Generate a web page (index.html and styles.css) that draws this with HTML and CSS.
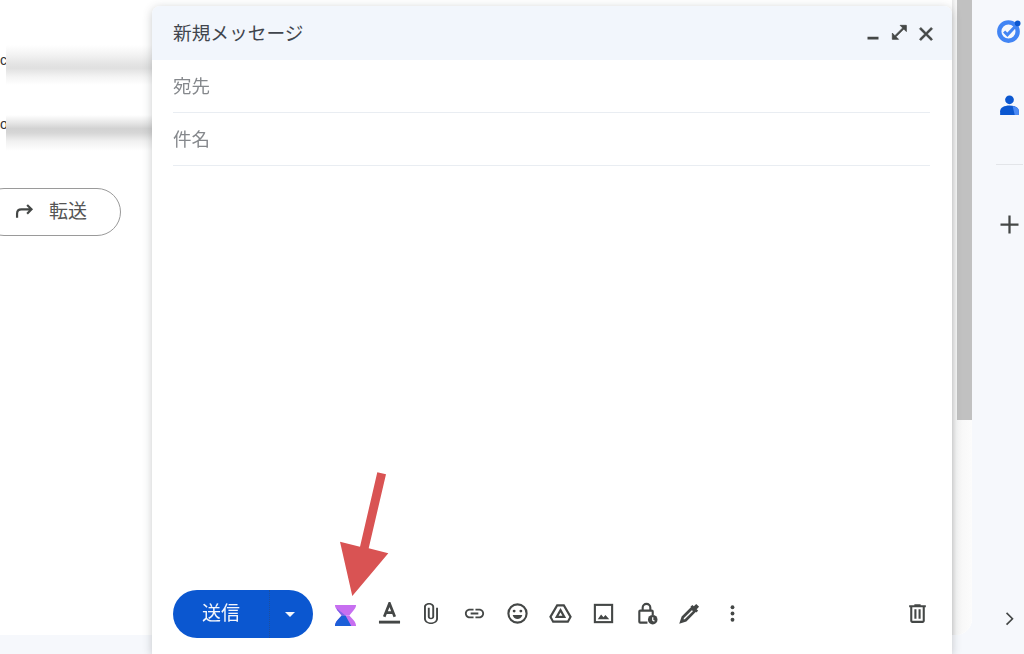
FILE: index.html
```html
<!DOCTYPE html>
<html lang="ja">
<head>
<meta charset="utf-8">
<title>新規メッセージ</title>
<link rel="stylesheet" href="styles.css">
</head>
<body>
<div class="page">
  <div class="main">
    <div class="mail">
      <div class="mail-row first"><span class="letter">c</span><div class="smear"></div></div>
      <div class="mail-row second"><span class="letter low">o</span><div class="smear dark"></div></div>
      <div class="forward">
        <svg class="forward-icon" viewBox="0 0 24 24"><path d="M3.500 19v-4.500c0-3 2-5 5-5H20M15 4.500l5 5-5 5"/></svg>
        <span class="forward-label">転送</span>
      </div>
    </div>
    <div class="scrollbar"><div class="thumb"></div></div>
  </div>
  <aside class="rail">
    <svg class="rail-icon tasks" viewBox="0 0 24 24">
      <circle cx="11.500" cy="12.500" r="8.500" class="tasks-ring"/>
      <path d="M7.500 12.500l3 3 7-7.500" class="tasks-check"/>
      <circle cx="20" cy="5" r="2.600" fill="#0b57d0"/>
    </svg>
    <svg class="rail-icon person" viewBox="0 0 24 24">
      <circle cx="12" cy="6.500" r="4.200" fill="#0b57d0"/>
      <path d="M3 21v-3.500C3 14 7 12 12 12s9 2 9 5.500V21z" fill="#0b57d0"/>
      <path d="M15 12.500c3.500.6 6 2.400 6 5V21h-4z" fill="#4c8bf5"/>
    </svg>
    <div class="rail-divider"></div>
    <svg class="rail-icon plus" viewBox="0 0 24 24"><path d="M20 13h-7v7h-2v-7H4v-2h7V4h2v7h7z"/></svg>
    <svg class="rail-icon chevron" viewBox="0 0 24 24"><path d="M8.600 5.400L10 4l8 8-8 8-1.400-1.400L15.200 12z"/></svg>
  </aside>

  <section class="compose">
    <header class="compose-head">
      <span class="compose-title">新規メッセージ</span>
      <div class="head-icons">
        <span class="head-cell"><svg class="head-icon big" viewBox="0 0 24 24"><path d="M6 15h12v3H6z"/></svg></span>
        <span class="head-cell"><svg class="head-icon heavy" viewBox="0 0 24 24"><path d="M21 11V3h-8l3.290 3.290-10 10L3 13v8h8l-3.290-3.290 10-10z"/></svg></span>
        <span class="head-cell"><svg class="head-icon big heavy" viewBox="0 0 24 24"><path d="M19 6.410L17.590 5 12 10.590 6.410 5 5 6.410 10.590 12 5 17.590 6.410 19 12 13.410 17.590 19 19 17.590 13.410 12z"/></svg></span>
      </div>
    </header>
    <div class="field">宛先</div>
    <div class="field">件名</div>
    <div class="body-area"></div>
    <footer class="toolbar">
      <div class="send">
        <span class="send-label">送信</span>
        <span class="send-more"><span class="caret"></span></span>
      </div>
      <div class="tools">
        <span class="tool hourglass">
          <svg class="icon" viewBox="0 0 24 24">
            <path d="M1 1h22c0 2-1 4-2.500 5.500L16 12H8L3.500 6.500C2 5 1 3 1 1z" fill="#c76ff0"/>
            <path d="M8 12L3.500 6.500 2.500 4.500 12 12z" fill="#7f64e6"/>
            <path d="M8 12l-4.500 5C2 18.500 1 21 1 23h22c0-2-1-4.500-2.500-6L16 12z" fill="#c76ff0"/>
            <path d="M8 12l-4.500 5C2 18.500 1 21 1 23h17l-6-11z" fill="#1c5fd8"/>
          </svg>
        </span>
        <span class="tool letter-tool">
          <svg class="icon" viewBox="0 0 24 24">
            <path d="M6.500 15.500L12 1.500l5.500 14M8.300 11h7.400" class="line bold"/>
            <path d="M1 19.500h22v3H1z"/>
          </svg>
        </span>
        <span class="tool">
          <svg class="icon clip" viewBox="7 1 11 22" preserveAspectRatio="none"><path d="M16.500 6v11.500c0 2.210-1.790 4-4 4s-4-1.790-4-4V5c0-1.380 1.120-2.500 2.500-2.500s2.500 1.120 2.500 2.500v10.500c0 .55-.45 1-1 1s-1-.45-1-1V6H10v9.500c0 1.380 1.120 2.500 2.500 2.500s2.500-1.120 2.500-2.500V5c0-2.210-1.790-4-4-4S7 2.790 7 5v12.500c0 3.040 2.460 5.500 5.500 5.500s5.500-2.460 5.500-5.500V6h-1.500z"/></svg>
        </span>
        <span class="tool">
          <svg class="icon" viewBox="0 0 24 24"><path d="M3.900 12c0-1.710 1.390-3.100 3.100-3.100h4V7H7c-2.760 0-5 2.240-5 5s2.240 5 5 5h4v-1.900H7c-1.710 0-3.100-1.390-3.100-3.100zM8 13h8v-2H8v2zm9-6h-4v1.900h4c1.710 0 3.100 1.390 3.100 3.100s-1.390 3.100-3.100 3.100h-4V17h4c2.760 0 5-2.240 5-5s-2.240-5-5-5z"/></svg>
        </span>
        <span class="tool">
          <svg class="icon" viewBox="0 0 24 24">
            <circle cx="12" cy="12" r="9.500" class="line"/>
            <circle cx="8.500" cy="9.500" r="1.500"/><circle cx="15.500" cy="9.500" r="1.500"/>
            <path d="M7 13.500h10c-.6 2.600-2.600 4.200-5 4.200s-4.400-1.600-5-4.200z"/>
          </svg>
        </span>
        <span class="tool">
          <svg class="icon" viewBox="0 0 24 24">
            <path d="M8.500 3.500h7l7 12-2.800 5H4.300l-2.800-5z" class="line"/>
            <path d="M12 8.500l4 7H8z" class="line"/>
          </svg>
        </span>
        <span class="tool">
          <svg class="icon" viewBox="0 0 24 24">
            <rect x="3" y="3" width="18" height="18" class="line"/>
            <path d="M6 18l3.500-5 2.500 3 2-2.500 4 4.500z"/>
          </svg>
        </span>
        <span class="tool">
          <svg class="icon" viewBox="0 0 24 24">
            <path d="M8 9V6a4 4 0 0 1 8 0v3" class="line"/>
            <path d="M13 21.500H5.500a1 1 0 0 1-1-1V10a1 1 0 0 1 1-1h12a1 1 0 0 1 1 1v3.500" class="line"/>
            <circle cx="18.500" cy="18.500" r="5"/>
            <path d="M18.500 16v3l1.800 1" class="clock"/>
          </svg>
        </span>
        <span class="tool">
          <svg class="icon" viewBox="0 0 24 24">
            <path d="M14.500 6.500l3 3L8 19l-4.500 1.500L5 16z" class="line bold"/>
            <path d="M13 5l2-2 1.500 1.500L19 2l3 3-2.500 2.500L21 9l-2 2z"/>
          </svg>
        </span>
        <span class="tool">
          <svg class="icon" viewBox="0 0 24 24"><circle cx="12" cy="5.500" r="2"/><circle cx="12" cy="12" r="2"/><circle cx="12" cy="18.500" r="2"/></svg>
        </span>
      </div>
      <span class="tool trash">
        <svg class="icon trash-icon" viewBox="0 0 24 24"><path d="M15 4V3H9v1H4v2h1v13c0 1.100.9 2 2 2h10c1.100 0 2-.9 2-2V6h1V4h-5zm2 15H7V6h10v13zM9 8h2v9H9zm4 0h2v9h-2z"/></svg>
      </span>
    </footer>
  </section>

  <svg class="arrow" viewBox="0 0 60 130">
    <path d="M38.300 2.300L47 4.300 29.700 78.300 49.300 83.300 13.300 126 1 71.700 21 76.700z"/>
  </svg>
</div>
</body>
</html>
```
FILE: styles.css
```css
* { box-sizing: border-box; }
html, body { margin: 0; height: 100%; overflow: hidden; }
body {
  background: #f6f8fc;
  font-family: "Noto Sans CJK JP", "Liberation Sans", sans-serif;
  color: #444746;
}
.page { position: relative; display: flex; height: 654px; overflow: hidden; filter: blur(.35px); }

.main {
  flex: 1;
  display: flex;
  height: 635px;
  background: #fff;
  border-bottom-right-radius: 16px;
  overflow: hidden;
}
.mail { flex: 1; padding-top: 45px; overflow: hidden; }
.mail-row { display: flex; align-items: stretch; height: 40px; }
.mail-row.second { height: 36px; margin-top: 30px; }
.letter {
  width: 7px;
  flex: none;
  font: 14px/30px "Liberation Sans", sans-serif;
  color: #333;
}
.letter.low { line-height: 18px; }
.smear {
  width: 146px;
  margin-left: -1px;
  background: linear-gradient(#fff, #f4f4f4 22%, #e4e4e4 48%, #e0e0e0 58%, #f4f4f4 80%, #fff);
}
.smear.dark { background: linear-gradient(#fff, #e6e6e6 22%, #d2d2d2 38%, #d6d6d6 50%, #f0f0f0 72%, #fff); }

.forward {
  display: flex;
  align-items: center;
  gap: 14px;
  width: 141px;
  height: 48px;
  margin: 37px 0 0 -20px;
  padding-left: 33px;
  padding-bottom: 2px;
  border: 1px solid #9a9a9a;
  border-radius: 24px;
  background: #fff;
  font-size: 19px;
  color: #555;
}
.forward-label { margin-bottom: 3px; }
.forward-icon { width: 21px; height: 21px; fill: none; stroke: #444746; stroke-width: 2.500; }

.scrollbar {
  width: 20px;
  padding-left: 5px;
  background: linear-gradient(90deg, #e6e6e6, #f6f6f6 4px, #fcfcfc);
}
.thumb { width: 15px; height: 420px; background: #c1c1c1; }

.rail {
  position: relative;
  width: 52px;
  display: flex;
  flex-direction: column;
  align-items: center;
  padding: 18px 0 0 22px;
}
.rail-icon { display: block; flex: none; fill: #444746; }
.tasks { width: 26px; height: 26px; }
.tasks-ring { fill: none; stroke: #4285f4; stroke-width: 4; }
.tasks-check { fill: none; stroke: #4285f4; stroke-width: 2.800; }
.person { width: 25px; height: 27px; margin-top: 47.500px; }
.rail-divider { flex: none; width: 27px; height: 1px; margin-top: 45.500px; background: #e3e5e9; }
.plus { width: 27px; height: 27px; margin-top: 45.500px; }
.chevron { width: 19.500px; height: 19.500px; margin: 371.750px 0 0 -1px; }

.compose {
  position: absolute;
  left: 152px;
  top: 6px;
  bottom: 0;
  width: 800px;
  display: flex;
  flex-direction: column;
  background: #fff;
  border-radius: 8px 8px 0 0;
  box-shadow: 0 2px 10px rgba(60, 64, 67, .28);
}
.compose-head {
  display: flex;
  align-items: center;
  justify-content: space-between;
  height: 54px;
  padding: 0 13.250px 0 21px;
  background: #f2f6fc;
  border-radius: 8px 8px 0 0;
}
.compose-title { font-size: 18.700px; color: #41454d; margin-bottom: 4px; }
.head-icons { display: flex; margin-top: 1px; }
.head-cell { width: 26.500px; display: flex; justify-content: center; }
.head-icon { width: 18.700px; height: 18.700px; fill: #444746; }
.head-icon.big { width: 22px; height: 22px; flex: none; }
.head-icon.heavy { stroke: #444746; stroke-width: 1; }

.field {
  display: flex;
  align-items: center;
  height: 53px;
  margin: 0 22px 0 21px;
  border-bottom: 1px solid #e9edf2;
  padding-bottom: 3px;
  font-size: 18.500px;
  color: #85888c;
}
.body-area { flex: 1; }

.toolbar {
  display: flex;
  align-items: center;
  height: 48px;
  margin: 0 22px 16px 21px;
}
.send {
  display: flex;
  flex: none;
  width: 140px;
  height: 48px;
  border-radius: 24px;
  background: #0b57d0;
  color: #f4f6fb;
  font-size: 19px;
  overflow: hidden;
}
.send-label {
  width: 97px;
  line-height: 44px;
  text-align: center;
  border-right: 1px dotted #1d4f9e;
}
.send-more { flex: 1; display: flex; align-items: center; justify-content: center; padding-right: 4px; }
.caret {
  width: 0;
  height: 0;
  border-left: 5px solid transparent;
  border-right: 5px solid transparent;
  border-top: 5.500px solid #f4f6fb;
  margin-top: 1px;
}
.tools { display: flex; margin: -2px 0 0 10.500px; flex: 1; }
.tool { width: 43px; height: 48px; flex: none; display: flex; align-items: center; justify-content: center; }
.tool.hourglass { padding-top: 5px; }
.tool.letter-tool { padding-left: 2px; }
.icon { width: 23px; height: 23px; flex: none; fill: #444746; }
.icon.clip { width: 14px; height: 21px; }
.line { fill: none; stroke: #444746; stroke-width: 2.200; }
.line.bold { stroke-width: 2.800; }
.clock { fill: none; stroke: #fff; stroke-width: 1.300; }
.trash { width: 25px; margin-top: -2px; }
.icon.trash-icon { width: 25px; height: 25px; }

.arrow {
  position: absolute;
  left: 339px;
  top: 470px;
  width: 60px;
  height: 130px;
  fill: #d95353;
}
```
